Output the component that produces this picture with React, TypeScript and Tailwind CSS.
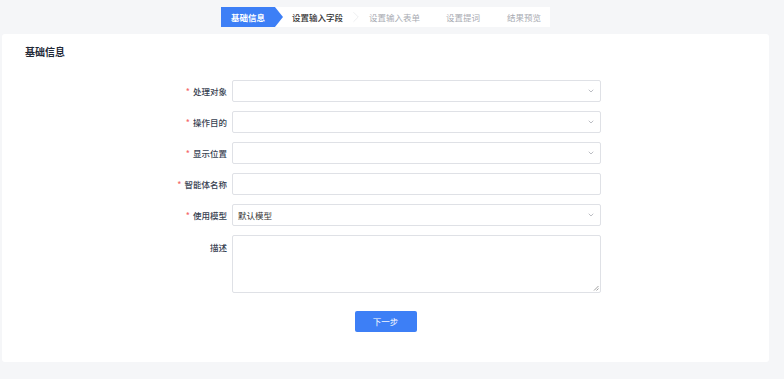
import { ChevronDown, ChevronRight } from "lucide-react";

const font = { fontFamily: '"Noto Sans CJK SC", "Noto Sans", sans-serif' };

function Label({ text, required }: { text: string; required?: boolean }) {
  return (
    <div className="w-[80px] shrink-0 flex justify-end items-center pr-[5px] text-[8.5px] font-medium text-[#374151]">
      {required && <span className="text-[#f56c6c] mr-[3px]">*</span>}
      {text}
    </div>
  );
}

function SelectRow({ label, value }: { label: string; value?: string }) {
  return (
    <div className="flex h-[22px]">
      <Label text={label} required />
      <div className="w-[369px] h-[22px] border border-[#dfe1e6] rounded-[2px] bg-white flex items-center justify-between px-[5px]">
        <span className="text-[8.5px] text-[#333]">{value}</span>
        <ChevronDown size={8} strokeWidth={1.6} className="text-[#808590]" />
      </div>
    </div>
  );
}

export default function App() {
  const steps = ["设置输入字段", "设置输入表单", "设置提词", "结果预览"];

  return (
    <div className="w-[784px] h-[379px] bg-[#f5f6f8] overflow-hidden" style={font}>
      {/* 步骤条 */}
      <div className="flex pt-[7px] pl-[221px]">
        <div className="flex h-[20px] w-[329px] bg-white items-center">
          <div
            className="h-full w-[62px] bg-[#3d7ff6] text-white text-[8.5px] font-bold flex items-center pl-[10px]"
            style={{ clipPath: "polygon(0 0, 87% 0, 100% 50%, 87% 100%, 0 100%)" }}
          >
            基础信息
          </div>
          <div className="w-[9px]" />
          <span className="text-[8.5px] font-medium text-[#333]">{steps[0]}</span>
          <ChevronRight size={18} strokeWidth={0.6} className="text-[#d6d9de] mx-[4px]" />
          <span className="text-[8.5px] text-[#a8abb2]">{steps[1]}</span>
          <span className="text-[8.5px] text-[#a8abb2] ml-[26px]">{steps[2]}</span>
          <span className="text-[8.5px] text-[#a8abb2] ml-[27px]">{steps[3]}</span>
        </div>
      </div>

      {/* 内容卡片 */}
      <div className="ml-[2px] mr-[15px] mt-[7px] h-[328px] bg-white rounded-[3px] pt-[10px]">
        <h1 className="pl-[23px] text-[10px] font-bold text-[#1f2937] leading-[16px]">基础信息</h1>

        <div className="flex flex-col gap-[9px] ml-[150px] mt-[20px]">
          <SelectRow label="处理对象" />
          <SelectRow label="操作目的" />
          <SelectRow label="显示位置" />
          <div className="flex h-[22px]">
            <Label text="智能体名称" required />
            <div className="w-[369px] h-[22px] border border-[#dfe1e6] rounded-[2px] bg-white" />
          </div>
          <SelectRow label="使用模型" value="默认模型" />
          <div className="flex">
            <div className="w-[80px] shrink-0 flex justify-end pr-[5px] pt-[6px] text-[8.5px] font-medium text-[#374151] leading-[12px]">
              描述
            </div>
            <div className="relative w-[369px] h-[58px] border border-[#dfe1e6] rounded-[2px] bg-white">
              <svg className="absolute right-[1px] bottom-[1px]" width="6" height="6" viewBox="0 0 6 6">
                <path d="M1 5.5 L5.5 1 M3.5 5.5 L5.5 3.5" stroke="#888" strokeWidth="0.8" />
              </svg>
            </div>
          </div>
        </div>

        <div className="flex justify-center mt-[18px]">
          <button className="w-[62px] h-[21px] bg-[#3d7ff6] rounded-[2px] text-white text-[8.5px]">
            下一步
          </button>
        </div>
      </div>
    </div>
  );
}
